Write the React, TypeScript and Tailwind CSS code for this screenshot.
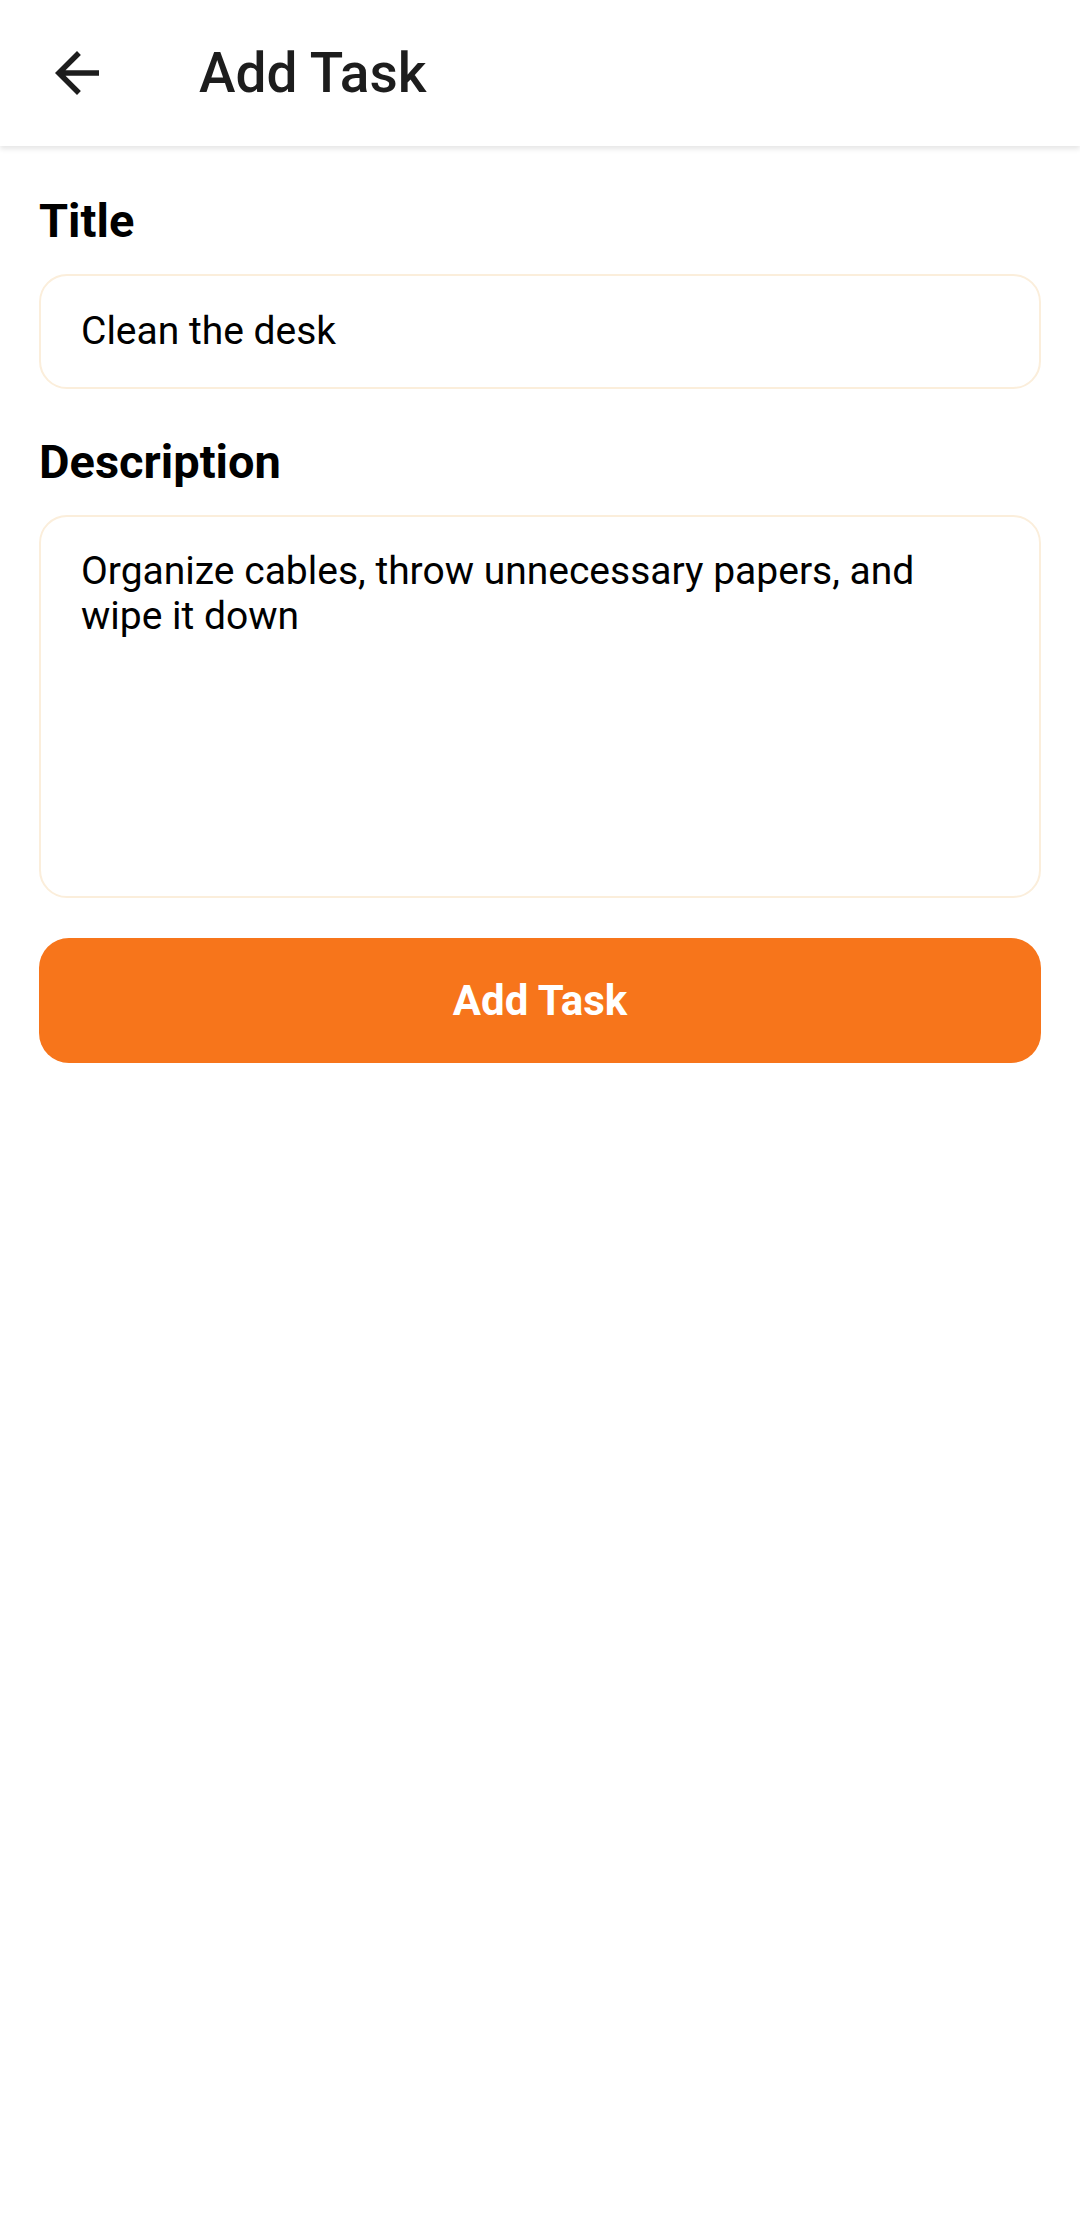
import React from "react";

export default function App() {
  return (
    <div className="min-h-[2239px] w-[1080px] bg-white font-['Roboto',sans-serif]">
      <header className="relative z-10 flex h-[146px] items-center bg-white shadow-[0_3px_5px_rgba(0,0,0,0.10)]">
        <button className="ml-[44px] flex h-[66px] w-[66px] items-center justify-center text-[#1d1d1d]">
          <svg viewBox="0 0 24 24" width="66" height="66" fill="currentColor">
            <path d="M20 11H7.83l5.59-5.59L12 4l-8 8 8 8 1.41-1.41L7.83 13H20v-2z" />
          </svg>
        </button>
        <h1 className="ml-[89px] text-[55px] leading-[66px] font-medium text-[#1d1d1d]">Add Task</h1>
      </header>
      <main className="flex flex-col px-[39px]">
        <label className="mt-[47px] text-[47px] leading-[56px] font-bold text-black">Title</label>
        <div className="mt-[25px] flex h-[115px] items-center rounded-[28px] border-2 border-[#fbeedb] pl-[40px] pr-[60px]">
          <span className="text-[39px] leading-[45px] text-black">Clean the desk</span>
        </div>
        <label className="mt-[45px] text-[47px] leading-[56px] font-bold text-black">Description</label>
        <div className="mt-[25px] h-[383px] rounded-[28px] border-2 border-[#fbeedb] pl-[40px] pr-[60px] pt-[32px]">
          <p className="text-[39px] leading-[45px] text-black">
            Organize cables, throw unnecessary papers, and wipe it down
          </p>
        </div>
        <button className="mt-[40px] flex h-[125px] items-center justify-center rounded-[30px] bg-[#f7751b]">
          <span className="text-[42px] font-bold text-white">Add Task</span>
        </button>
      </main>
    </div>
  );
}
